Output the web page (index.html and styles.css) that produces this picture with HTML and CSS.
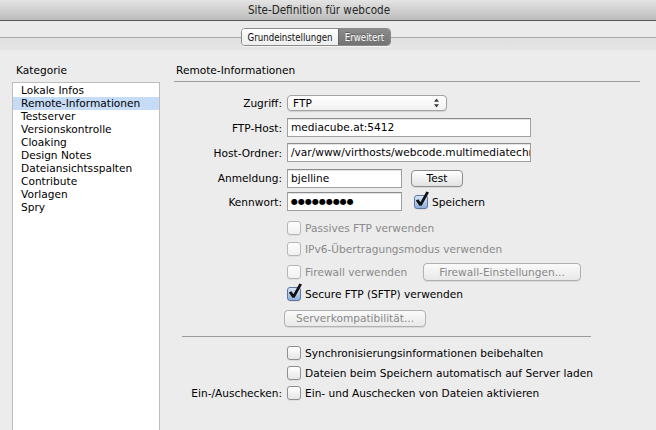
FILE: index.html
```html
<!DOCTYPE html>
<html lang="de">
<head>
<meta charset="utf-8">
<title>Site-Definition für webcode</title>
<link rel="stylesheet" href="styles.css">
</head>
<body>
<div class="window">
  <header class="titlebar"><span class="title">Site-Definition für webcode</span></header>
  <div class="toolbar">
    <div class="seg">
      <span class="seg-item">Grundeinstellungen</span><span class="seg-item active">Erweitert</span>
    </div>
  </div>
  <div class="main">
    <aside class="sidebar">
      <div class="side-label">Kategorie</div>
      <ul class="cat-list">
        <li>Lokale Infos</li>
        <li class="sel">Remote-Informationen</li>
        <li>Testserver</li>
        <li>Versionskontrolle</li>
        <li>Cloaking</li>
        <li>Design Notes</li>
        <li>Dateiansichtsspalten</li>
        <li>Contribute</li>
        <li>Vorlagen</li>
        <li>Spry</li>
      </ul>
    </aside>
    <section class="panel">
      <h2 class="panel-title">Remote-Informationen</h2>
      <div class="form">
        <div class="row r-zugriff">
          <span class="lbl">Zugriff:</span>
          <div class="select"><span>FTP</span>
            <svg class="arrows" width="7" height="10" viewBox="0 0 7 10"><path d="M3.5 0.5 L6 3.8 L1 3.8 Z M3.5 9.5 L6 6.2 L1 6.2 Z" fill="#3a3a3a"/></svg>
          </div>
        </div>
        <div class="row r-host">
          <span class="lbl">FTP-Host:</span>
          <div class="input wide">mediacube.at:5412</div>
        </div>
        <div class="row r-ordner">
          <span class="lbl">Host-Ordner:</span>
          <div class="input wide">/var/www/virthosts/webcode.multimediatechnik.at/</div>
        </div>
        <div class="row r-anm">
          <span class="lbl">Anmeldung:</span>
          <div class="input short">bjelline</div>
          <div class="btn btn-test">Test</div>
        </div>
        <div class="row r-kenn">
          <span class="lbl">Kennwort:</span>
          <div class="input short pw">●●●●●●●●●</div>
          <label class="cb-group save">
            <span class="cb checked"><svg class="tick" width="16" height="18" viewBox="0 0 16 18"><path d="M1.8 9.6 L4.4 8.2 L6.4 11.2 L12.4 0.4 L15 1.4 L7.6 14.8 L5.4 14.8 Z" fill="#111"/></svg></span>
            <span class="cb-text">Speichern</span>
          </label>
        </div>
        <div class="row r-cb r-passiv">
          <label class="cb-group dis"><span class="cb"></span><span class="cb-text">Passives FTP verwenden</span></label>
        </div>
        <div class="row r-cb r-ipv6">
          <label class="cb-group dis"><span class="cb"></span><span class="cb-text">IPv6-Übertragungsmodus verwenden</span></label>
        </div>
        <div class="row r-cb r-fw">
          <label class="cb-group dis fwgroup"><span class="cb"></span><span class="cb-text">Firewall verwenden</span></label>
          <div class="btn dis btn-fw">Firewall-Einstellungen...</div>
        </div>
        <div class="row r-cb r-sftp">
          <label class="cb-group">
            <span class="cb checked"><svg class="tick" width="16" height="18" viewBox="0 0 16 18"><path d="M1.8 9.6 L4.4 8.2 L6.4 11.2 L12.4 0.4 L15 1.4 L7.6 14.8 L5.4 14.8 Z" fill="#111"/></svg></span>
            <span class="cb-text">Secure FTP (SFTP) verwenden</span>
          </label>
        </div>
        <div class="row r-server">
          <div class="btn dis btn-server">Serverkompatibilität...</div>
        </div>
        <div class="divider"></div>
        <div class="row r-cb r-sync">
          <label class="cb-group"><span class="cb"></span><span class="cb-text">Synchronisierungsinformationen beibehalten</span></label>
        </div>
        <div class="row r-cb r-auto">
          <label class="cb-group"><span class="cb"></span><span class="cb-text">Dateien beim Speichern automatisch auf Server laden</span></label>
        </div>
        <div class="row r-ein">
          <span class="lbl">Ein-/Auschecken:</span>
          <label class="cb-group"><span class="cb"></span><span class="cb-text">Ein- und Auschecken von Dateien aktivieren</span></label>
        </div>
      </div>
    </section>
  </div>
</div>
</body>
</html>
```

FILE: styles.css
```css
* { box-sizing: border-box; }
html, body {
  margin: 0;
  padding: 0;
  width: 656px;
  height: 430px;
  overflow: hidden;
  background: #ececec;
}
body {
  font-family: "DejaVu Sans", "Liberation Sans", sans-serif;
  font-size: 10.6px;
  color: #000;
}
.window { width: 656px; height: 430px; overflow: hidden; }

.titlebar {
  height: 21px;
  border-bottom: 1px solid #575757;
  background: linear-gradient(#e4e4e4, #bcbcbc);
  display: flex;
  justify-content: center;
  padding-right: 18px;
  align-items: center;
}
.title {
  font-family: "DejaVu Sans Condensed", "DejaVu Sans", sans-serif;
  font-stretch: condensed;
  font-size: 11.6px;
  color: #262626;
  line-height: 20px;
}

.toolbar {
  height: 29px;
  padding: 7px 0 0 241px;
  background: linear-gradient(to bottom, #ebebeb 0, #ebebeb 16px, #a8a8a8 16px, #a8a8a8 17px, #e1e1e1 17px, #e4e4e4 29px);
}
.seg {
  display: inline-flex;
  height: 18px;
  border: 1px solid #8a8a8a;
  border-radius: 4px;
  overflow: hidden;
  font-family: "DejaVu Sans Condensed", "DejaVu Sans", sans-serif;
  font-stretch: condensed;
  font-size: 9.6px;
  box-shadow: 0 1px 0 rgba(255,255,255,0.6);
}
.seg-item {
  display: flex;
  align-items: center;
  justify-content: center;
  height: 16px;
  width: 96px;
  background: linear-gradient(#ffffff, #ededed);
  color: #111;
}
.seg-item.active {
  width: 52px;
  border-left: 1px solid #666;
  background: linear-gradient(#8c8c8c, #727272);
  color: #fff;
  text-shadow: 0 -1px 0 rgba(0,0,0,0.35);
}

.main { display: flex; }
.sidebar { padding-left: 12px; width: 174px; flex: none; }
.side-label {
  padding: 13px 0 0 4px;
  line-height: 14px;
  margin-bottom: 5px;
}
.cat-list {
  list-style: none;
  margin: 0;
  padding: 1px 0 0;
  width: 148px;
  height: 400px;
  background: #fff;
  border: 1px solid #bdbdbd;
}
.cat-list li {
  height: 13px;
  line-height: 13px;
  padding-left: 8px;
  white-space: nowrap;
}
.cat-list li.sel { background: #c5dbf6; }

.panel { width: 466px; flex: none; }
.panel-title {
  margin: 0;
  font-size: 10.6px;
  font-weight: normal;
  padding: 12px 0 3px 2px;
  line-height: 16px;
  border-bottom: 1px solid #9a9a9a;
}
.form { padding-top: 13px; }

.row { display: flex; align-items: center; }
.lbl {
  width: 113px;
  flex: none;
  text-align: right;
  padding-right: 5px;
  white-space: nowrap;
}
.r-cb, .r-server { padding-left: 113px; }

.r-zugriff { height: 16px; }
.r-host { height: 19px; margin-top: 7px; }
.r-ordner { height: 19px; margin-top: 6px; }
.r-anm { height: 18px; margin-top: 7px; }
.r-kenn { height: 19px; margin-top: 5px; }
.r-passiv { height: 18px; margin-top: 8px; }
.r-ipv6 { height: 18px; margin-top: 3px; }
.r-fw { height: 18px; margin-top: 5px; }
.r-sftp { height: 18px; margin-top: 4px; }
.r-server { height: 18px; margin-top: 6px; padding-left: 110px; }
.r-sync { height: 18px; margin-top: 7px; }
.r-auto { height: 18px; margin-top: 2px; }
.r-ein { height: 18px; margin-top: 2px; }

.select {
  position: relative;
  width: 160px;
  height: 16px;
  border: 1px solid #a2a2a2;
  border-radius: 4px;
  background: linear-gradient(#ffffff, #f1f1f1);
  display: flex;
  align-items: center;
  padding-left: 5px;
  box-shadow: 0 1px 1px rgba(0,0,0,0.12);
}
.select .arrows { position: absolute; right: 6px; top: 2px; }

.input {
  height: 19px;
  background: #fff;
  border: 1px solid #a0a0a0;
  border-top-color: #8c8c8c;
  padding-left: 3px;
  line-height: 17px;
  white-space: nowrap;
  overflow: hidden;
  box-shadow: inset 0 1px 0 #e4e4e4;
}
.input.wide { width: 244px; }
.input.short { width: 115px; }
.input.pw {
  font-size: 8px;
  letter-spacing: 0;
  line-height: 17px;
}

.btn {
  display: flex;
  align-items: center;
  justify-content: center;
  height: 17px;
  border: 1px solid #8e8e8e;
  border-radius: 4px;
  background: linear-gradient(#ffffff, #e2e2e2);
  box-shadow: 0 1px 0 rgba(0,0,0,0.08);
  white-space: nowrap;
}
.btn.dis { color: #888; border-color: #b0b0b0; background: linear-gradient(#fafafa, #e9e9e9); }
.btn-test { width: 52px; margin-left: 9px; }
.btn-fw { width: 158px; height: 18px; }
.btn-server { width: 142px; }

.cb-group { display: flex; align-items: center; white-space: nowrap; }
.save { margin-left: 12px; }
.fwgroup { width: 136px; }
.cb {
  position: relative;
  width: 14px;
  height: 14px;
  flex: none;
  border: 1px solid #8f8f8f;
  border-radius: 3px;
  background: linear-gradient(#ffffff, #e6e6e6);
  margin-right: 4px;
  box-shadow: 0 1px 0 rgba(0,0,0,0.06);
}
.cb.checked {
  border-color: #5a76a3;
  background: linear-gradient(#d7e4f6, #8fb0dd);
}
.cb .tick { position: absolute; left: -1px; top: -5px; overflow: visible; }
.dis .cb { border-color: #b6b6b6; background: linear-gradient(#fdfdfd, #f0f0f0); }
.dis .cb-text { color: #8a8a8a; }

.divider {
  margin: 9px 0 0 8px;
  width: 409px;
  height: 1px;
  background: #9a9a9a;
}
```
